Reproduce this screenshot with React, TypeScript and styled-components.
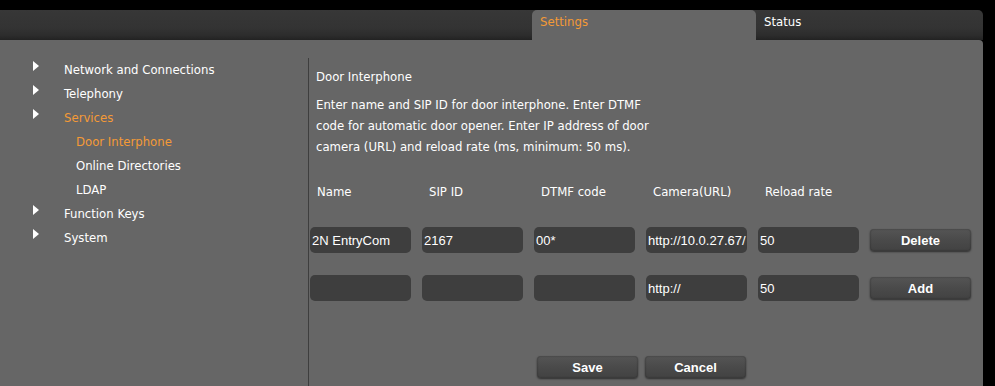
import React from "react";
import styled, { createGlobalStyle } from "styled-components";

const Global = createGlobalStyle`
  html, body { margin: 0; padding: 0; background: #000; }
  * { box-sizing: border-box; }
`;

const UI = `"DejaVu Sans Condensed", "DejaVu Sans", sans-serif`;
const FIELD = `"Liberation Sans", Arial, sans-serif`;
const ORANGE = "#f49a36";

const Page = styled.div`
  width: 995px;
  height: 386px;
  background: #000;
  padding-top: 10px;
  overflow: hidden;
  font-family: ${UI};
`;

const Frame = styled.div`
  width: 983px;
`;

const Header = styled.div`
  height: 30px;
  display: flex;
  padding-left: 532px;
  border-top-right-radius: 5px;
  background: linear-gradient(#373737 0%, #333 60%, #2c2c2c 85%, #222 100%);
`;

const Tab = styled.div<{ $active?: boolean }>`
  width: ${(p) => (p.$active ? "224px" : "auto")};
  padding: 4px 0 0 8px;
  font-size: 13px;
  color: ${(p) => (p.$active ? ORANGE : "#fff")};
  background: ${(p) => (p.$active ? "#666" : "transparent")};
  border-radius: 5px 5px 0 0;
`;

const Main = styled.div`
  height: 346px;
  background: #666;
  border-top-right-radius: 4px;
  display: grid;
  grid-template-columns: 308px 1fr;
`;

const Sidebar = styled.ul`
  list-style: none;
  margin: 0;
  padding: 17px 0 0 0;
`;

const NavItem = styled.li<{ $sub?: boolean; $on?: boolean }>`
  height: 24px;
  display: flex;
  align-items: center;
  padding-left: ${(p) => (p.$sub ? "76px" : "33px")};
  font-size: 13px;
  color: ${(p) => (p.$on ? ORANGE : "#fff")};
`;

const Arrow = styled.span`
  width: 0;
  height: 0;
  border-top: 5px solid transparent;
  border-bottom: 5px solid transparent;
  border-left: 6px solid #fff;
  margin-right: 25px;
  margin-top: -7px;
`;

const Content = styled.div`
  margin-top: 18px;
  border-left: 1px solid #3e3e3e;
  padding-top: 9px;
`;

const Heading = styled.div`
  padding-left: 7px;
  font-size: 13px;
  line-height: 20px;
  color: #fff;
`;

const Para = styled.p`
  margin: 7px 0 0;
  padding-left: 7px;
  width: 360px;
  font-size: 13px;
  line-height: 21px;
  color: #fff;
`;

const Grid = styled.div`
  display: grid;
  grid-template-columns: repeat(6, 101px);
  column-gap: 11px;
  padding-left: 1px;
`;

const HeadRow = styled(Grid)`
  margin-top: 24px;
  height: 20px;
  align-items: center;
`;

const ColHead = styled.div`
  padding-left: 7px;
  font-size: 13px;
  color: #fff;
`;

const Row = styled(Grid)<{ $gap: number }>`
  margin-top: ${(p) => p.$gap}px;
  height: 26px;
  align-items: center;
`;

const Field = styled.div`
  height: 26px;
  background: #3e3e3e;
  border-radius: 5px;
  padding: 0 2px;
  display: flex;
  align-items: center;
  overflow: hidden;
  white-space: nowrap;
  font-family: ${FIELD};
  font-size: 13px;
  color: #fff;
`;

const Button = styled.button`
  width: 101px;
  height: 22px;
  border: none;
  border-radius: 4px;
  background: linear-gradient(#555 0%, #4a4a4a 50%, #424242 100%);
  box-shadow: 0 1px 2px rgba(0, 0, 0, 0.55), inset 0 0 2px rgba(0, 0, 0, 0.4);
  color: #fff;
  font-family: ${FIELD};
  font-weight: bold;
  font-size: 13px;
  padding: 0;
`;

const Footer = styled.div`
  margin-top: 55px;
  padding-left: 228px;
  display: flex;
  gap: 7px;
`;

const nav = [
  { label: "Network and Connections", arrow: true },
  { label: "Telephony", arrow: true },
  { label: "Services", arrow: true, on: true },
  { label: "Door Interphone", sub: true, on: true },
  { label: "Online Directories", sub: true },
  { label: "LDAP", sub: true },
  { label: "Function Keys", arrow: true },
  { label: "System", arrow: true },
];

const rows = [
  { vals: ["2N EntryCom", "2167", "00*", "http://10.0.27.67/", "50"], btn: "Delete", gap: 26 },
  { vals: ["", "", "", "http://", "50"], btn: "Add", gap: 22 },
];

export default function App() {
  return (
    <Page>
      <Global />
      <Frame>
        <Header>
          <Tab $active>Settings</Tab>
          <Tab>Status</Tab>
        </Header>
        <Main>
          <Sidebar>
            {nav.map((n) => (
              <NavItem key={n.label} $sub={n.sub} $on={n.on}>
                {n.arrow && <Arrow />}
                {n.label}
              </NavItem>
            ))}
          </Sidebar>
          <Content>
            <Heading>Door Interphone</Heading>
            <Para>
              Enter name and SIP ID for door interphone. Enter DTMF code for automatic door opener. Enter IP address of
              door camera (URL) and reload rate (ms, minimum: 50 ms).
            </Para>
            <HeadRow>
              {["Name", "SIP ID", "DTMF code", "Camera(URL)", "Reload rate"].map((h) => (
                <ColHead key={h}>{h}</ColHead>
              ))}
            </HeadRow>
            {rows.map((r) => (
              <Row key={r.btn} $gap={r.gap}>
                {r.vals.map((v, i) => (
                  <Field key={i}>{v}</Field>
                ))}
                <Button>{r.btn}</Button>
              </Row>
            ))}
            <Footer>
              <Button>Save</Button>
              <Button>Cancel</Button>
            </Footer>
          </Content>
        </Main>
      </Frame>
    </Page>
  );
}
